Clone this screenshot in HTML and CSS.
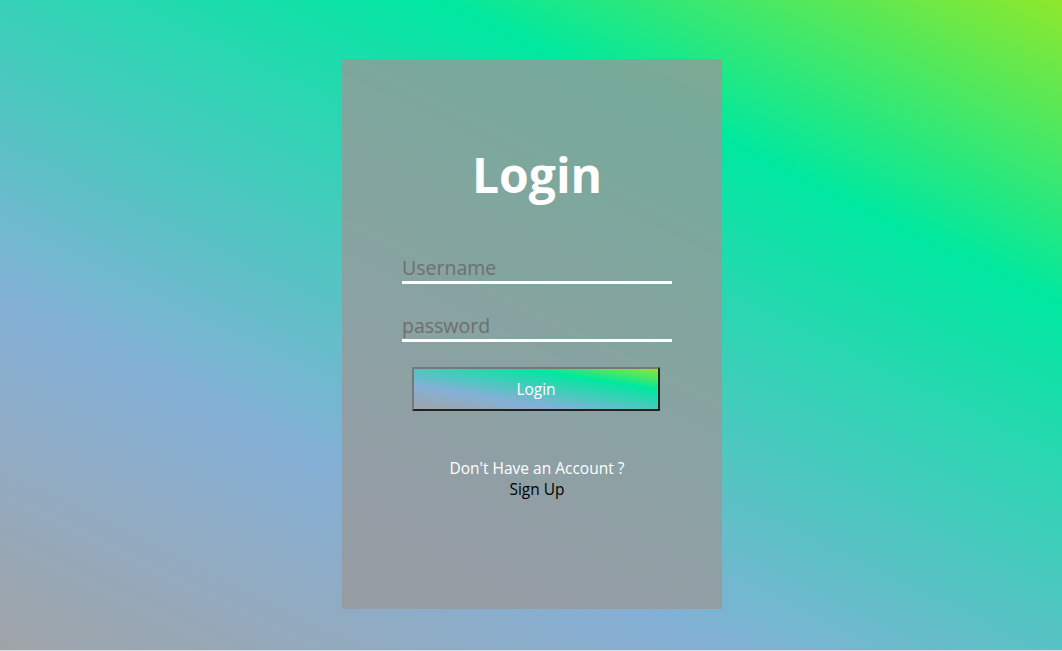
FILE: index.html
```html
<!DOCTYPE html>
<html lang="en">
<head>
<meta charset="utf-8">
<title>Login</title>
<link rel="stylesheet" href="styles.css">
</head>
<body>
<main class="page">
  <section class="card">
    <h1 class="title">Login</h1>
    <form class="form">
      <input class="field" type="text" placeholder="Username">
      <input class="field" type="password" placeholder="password">
      <button class="btn" type="button">Login</button>
    </form>
    <div class="foot">
      <p class="ask">Don't Have an Account ?</p>
      <a class="signup" href="#">Sign Up</a>
    </div>
  </section>
</main>
</body>
</html>
```
FILE: styles.css
```css
html {
  background: #d8dde2;
}
body {
  margin: 0;
  font-family: "Open Sans", "Noto Sans", sans-serif;
}
.page {
  height: 650px;
  padding: 59px 0 0 2px;
  box-sizing: border-box;
  background: linear-gradient(26deg, #a0a4a8 0%, #84b0d6 30%, #00e8a0 74%, #8ee82c 100%);
}
.card {
  width: 380px;
  height: 550px;
  margin: 0 auto;
  background: rgba(152, 152, 152, 0.78);
  display: flex;
  flex-direction: column;
  align-items: center;
  box-sizing: border-box;
  padding-top: 83px;
}
.title {
  margin: 0 0 0 10px;
  color: #fff;
  font-size: 48px;
  font-weight: 700;
  line-height: 66px;
}
.form {
  display: flex;
  flex-direction: column;
  align-items: center;
  margin-top: 45px;
}
.field {
  width: 270px;
  margin-left: 10px;
  box-sizing: border-box;
  border: 0;
  border-bottom: 3px solid #fff;
  background: transparent;
  padding: 0;
  height: 31px;
  font-family: inherit;
  font-size: 19.5px;
  color: #333;
  outline: none;
  margin-bottom: 27px;
}
.field::placeholder {
  color: #6c706f;
}
.btn {
  margin-top: -2px;
  margin-left: 8px;
  width: 248px;
  height: 44px;
  border: 2px solid;
  border-color: #777 #222 #222 #777;
  background: linear-gradient(to top right, #a0a4a8 0%, #84b0d6 30%, #00e8a0 74%, #8ee82c 100%);
  color: #fff;
  font-family: inherit;
  font-size: 15.5px;
}
.foot {
  margin-top: 47px;
  margin-left: 10px;
  display: flex;
  flex-direction: column;
  align-items: center;
  font-size: 15.5px;
  line-height: 21px;
}
.ask {
  margin: 0;
  color: #fff;
}
.signup {
  color: #000;
  text-decoration: none;
}
```
